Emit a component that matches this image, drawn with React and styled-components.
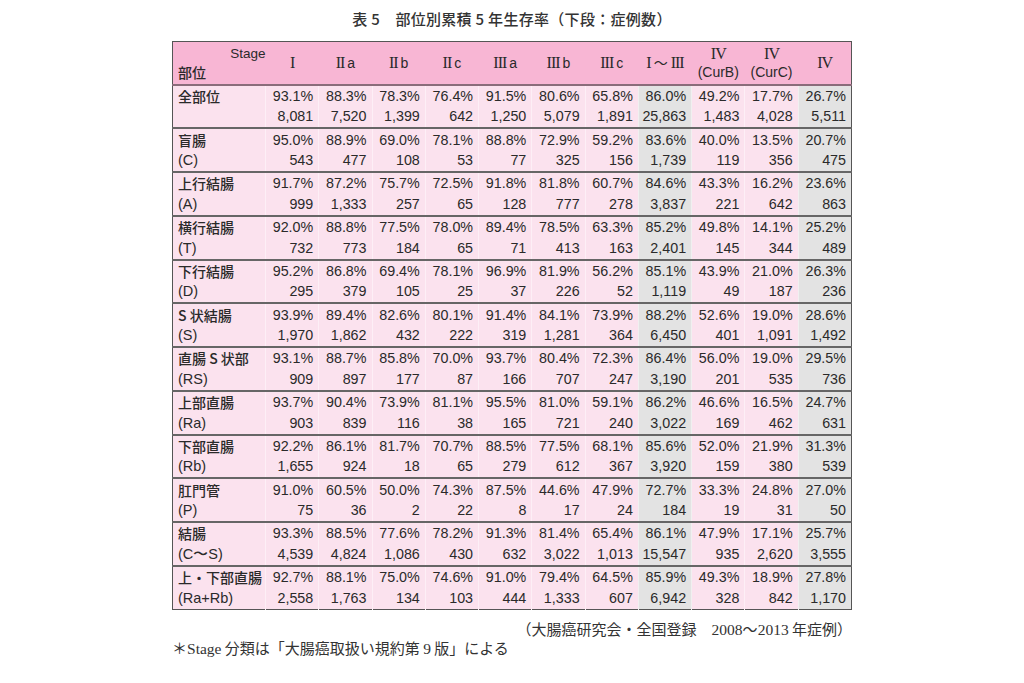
import styled, { createGlobalStyle } from "styled-components";

const GlobalStyle = createGlobalStyle`
  html, body {
    margin: 0;
    padding: 0;
    background: #fff;
  }
  body {
    font-family: "Liberation Sans", "Noto Sans CJK JP", sans-serif;
    color: #2a2a2a;
  }
`;

const Page = styled.div`
  width: 680px;
  margin: 0 auto;
  padding-top: 8px;
`;

const Title = styled.h1`
  margin: 0 0 11px;
  height: 22px;
  line-height: 22px;
  text-align: center;
  font-family: "Noto Sans CJK JP", sans-serif;
  font-size: 15px;
  font-weight: 500;
  color: #333;
  letter-spacing: 0.3px;
`;

const Table = styled.table`
  width: 680px;
  table-layout: fixed;
  border-collapse: collapse;
  border: 1.5px solid #555;
`;

const HeadRow = styled.tr`
  height: 43px;
  background: #f8b6d4;
  border-bottom: 2px solid #8a6c7a;
`;

const Th = styled.th`
  padding: 0;
  font-weight: normal;
  font-size: 14px;
  line-height: 18px;
  text-align: center;
  vertical-align: middle;
  color: #2a2a2a;
`;

const CornerCell = styled.th`
  padding: 0 0 0 5px;
  font-weight: normal;
  text-align: left;
  vertical-align: middle;
`;

const StageLabel = styled.div`
  text-align: right;
  font-family: "Liberation Sans", sans-serif;
  font-size: 13.5px;
  line-height: 18px;
`;

const BuiLabel = styled.div`
  font-family: "Noto Sans CJK JP", sans-serif;
  font-size: 14px;
  font-weight: 500;
  line-height: 18px;
`;

const Roman = styled.span`
  font-family: "Liberation Serif", serif;
  font-size: 16px;
  letter-spacing: -1px;
  margin-right: ${(p) => (p.$gap ? "3px" : "0")};
`;

const Tilde = styled.span`
  margin: 0 3px;
`;

const Sub = styled.span`
  display: block;
  font-size: 14px;
`;

const DataRow = styled.tr`
  height: 43.75px;
  border-top: 2px solid #666;
`;

const LabelCell = styled.td`
  padding: 0 0 0 5px;
  background: #fbe2ee;
  vertical-align: middle;
  font-family: "Noto Sans CJK JP", sans-serif;
  font-size: 14px;
  font-weight: 500;
  line-height: 20.5px;
  white-space: nowrap;
`;

const SubLabel = styled.div`
  font-family: "Liberation Sans", sans-serif;
  font-weight: normal;
  font-size: 14.5px;
`;

const NumCell = styled.td`
  padding: 0 5px 0 0;
  background: ${(p) => (p.$gray ? "#e3e3e3" : "#fbe2ee")};
  border-left: 1px solid rgba(255, 255, 255, 0.45);
  vertical-align: middle;
  text-align: right;
  font-size: 14.3px;
  line-height: 20.5px;
  white-space: nowrap;
`;

const Footer = styled.div`
  display: flex;
  flex-direction: column;
  padding-top: 10px;
  font-family: "Noto Sans CJK JP", sans-serif;
  font-size: 15px;
  font-weight: 400;
  color: #333;
`;

const Source = styled.div`
  text-align: right;
  line-height: 18px;
`;

const Note = styled.div`
  line-height: 18px;
`;

const Latin = styled.span`
  font-family: "Liberation Serif", serif;
  font-size: 15.5px;
`;

const gray = [false, false, false, false, false, false, false, true, false, false, true];

const rows = [
  ["全部位", "", ["93.1%", "88.3%", "78.3%", "76.4%", "91.5%", "80.6%", "65.8%", "86.0%", "49.2%", "17.7%", "26.7%"], ["8,081", "7,520", "1,399", "642", "1,250", "5,079", "1,891", "25,863", "1,483", "4,028", "5,511"]],
  ["盲腸", "(C)", ["95.0%", "88.9%", "69.0%", "78.1%", "88.8%", "72.9%", "59.2%", "83.6%", "40.0%", "13.5%", "20.7%"], ["543", "477", "108", "53", "77", "325", "156", "1,739", "119", "356", "475"]],
  ["上行結腸", "(A)", ["91.7%", "87.2%", "75.7%", "72.5%", "91.8%", "81.8%", "60.7%", "84.6%", "43.3%", "16.2%", "23.6%"], ["999", "1,333", "257", "65", "128", "777", "278", "3,837", "221", "642", "863"]],
  ["横行結腸", "(T)", ["92.0%", "88.8%", "77.5%", "78.0%", "89.4%", "78.5%", "63.3%", "85.2%", "49.8%", "14.1%", "25.2%"], ["732", "773", "184", "65", "71", "413", "163", "2,401", "145", "344", "489"]],
  ["下行結腸", "(D)", ["95.2%", "86.8%", "69.4%", "78.1%", "96.9%", "81.9%", "56.2%", "85.1%", "43.9%", "21.0%", "26.3%"], ["295", "379", "105", "25", "37", "226", "52", "1,119", "49", "187", "236"]],
  ["S 状結腸", "(S)", ["93.9%", "89.4%", "82.6%", "80.1%", "91.4%", "84.1%", "73.9%", "88.2%", "52.6%", "19.0%", "28.6%"], ["1,970", "1,862", "432", "222", "319", "1,281", "364", "6,450", "401", "1,091", "1,492"]],
  ["直腸 S 状部", "(RS)", ["93.1%", "88.7%", "85.8%", "70.0%", "93.7%", "80.4%", "72.3%", "86.4%", "56.0%", "19.0%", "29.5%"], ["909", "897", "177", "87", "166", "707", "247", "3,190", "201", "535", "736"]],
  ["上部直腸", "(Ra)", ["93.7%", "90.4%", "73.9%", "81.1%", "95.5%", "81.0%", "59.1%", "86.2%", "46.6%", "16.5%", "24.7%"], ["903", "839", "116", "38", "165", "721", "240", "3,022", "169", "462", "631"]],
  ["下部直腸", "(Rb)", ["92.2%", "86.1%", "81.7%", "70.7%", "88.5%", "77.5%", "68.1%", "85.6%", "52.0%", "21.9%", "31.3%"], ["1,655", "924", "18", "65", "279", "612", "367", "3,920", "159", "380", "539"]],
  ["肛門管", "(P)", ["91.0%", "60.5%", "50.0%", "74.3%", "87.5%", "44.6%", "47.9%", "72.7%", "33.3%", "24.8%", "27.0%"], ["75", "36", "2", "22", "8", "17", "24", "184", "19", "31", "50"]],
  ["結腸", "(C〜S)", ["93.3%", "88.5%", "77.6%", "78.2%", "91.3%", "81.4%", "65.4%", "86.1%", "47.9%", "17.1%", "25.7%"], ["4,539", "4,824", "1,086", "430", "632", "3,022", "1,013", "15,547", "935", "2,620", "3,555"]],
  ["上・下部直腸", "(Ra+Rb)", ["92.7%", "88.1%", "75.0%", "74.6%", "91.0%", "79.4%", "64.5%", "85.9%", "49.3%", "18.9%", "27.8%"], ["2,558", "1,763", "134", "103", "444", "1,333", "607", "6,942", "328", "842", "1,170"]],
];

function App() {
  return (
    <Page>
      <GlobalStyle />
      <Title>表 5　部位別累積 5 年生存率（下段：症例数）</Title>
      <Table>
        <colgroup>
          <col style={{ width: 93 }} />
          {gray.map((_, i) => (
            <col key={i} />
          ))}
        </colgroup>
        <thead>
          <HeadRow>
            <CornerCell>
              <StageLabel>Stage</StageLabel>
              <BuiLabel>部位</BuiLabel>
            </CornerCell>
            <Th><Roman>I</Roman></Th>
            <Th><Roman $gap>II</Roman>a</Th>
            <Th><Roman $gap>II</Roman>b</Th>
            <Th><Roman $gap>II</Roman>c</Th>
            <Th><Roman $gap>III</Roman>a</Th>
            <Th><Roman $gap>III</Roman>b</Th>
            <Th><Roman $gap>III</Roman>c</Th>
            <Th><Roman>I</Roman><Tilde>〜</Tilde><Roman>III</Roman></Th>
            <Th><Roman>IV</Roman><Sub>(CurB)</Sub></Th>
            <Th><Roman>IV</Roman><Sub>(CurC)</Sub></Th>
            <Th><Roman>IV</Roman></Th>
          </HeadRow>
        </thead>
        <tbody>
          {rows.map(([name, sub, rates, counts]) => (
            <DataRow key={name}>
              <LabelCell>
                <div>{name}</div>
                <SubLabel>{sub || "\u00a0"}</SubLabel>
              </LabelCell>
              {rates.map((r, i) => (
                <NumCell key={i} $gray={gray[i]}>
                  <div>{r}</div>
                  <div>{counts[i]}</div>
                </NumCell>
              ))}
            </DataRow>
          ))}
        </tbody>
      </Table>
      <Footer>
        <Source>
          （大腸癌研究会・全国登録　<Latin>2008</Latin>〜<Latin>2013</Latin> 年症例）
        </Source>
        <Note>
          ＊<Latin>Stage</Latin> 分類は「大腸癌取扱い規約第 <Latin>9</Latin> 版」による
        </Note>
      </Footer>
    </Page>
  );
}

export default App;
